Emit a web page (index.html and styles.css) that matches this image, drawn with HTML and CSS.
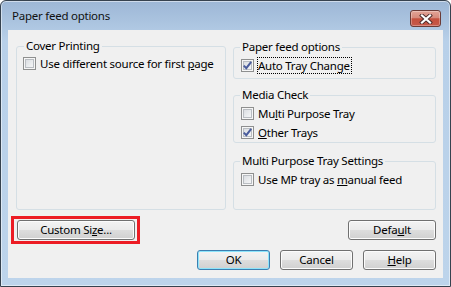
FILE: index.html
```html
<!DOCTYPE html>
<html>
<head>
<meta charset="utf-8">
<link rel="stylesheet" href="styles.css">
</head>
<body>
<div class="window">
  <div class="titlebar">
    <span class="title">Paper feed options</span>
    <span class="close">
      <svg width="14" height="10" viewBox="0 0 14 10">
        <path d="M3 1.5 L11 8.5 M11 1.5 L3 8.5" stroke="#4a2a2a" stroke-width="4" stroke-linecap="square" fill="none"/>
        <path d="M3 1.5 L11 8.5 M11 1.5 L3 8.5" stroke="#ffffff" stroke-width="2.2" stroke-linecap="square" fill="none"/>
      </svg>
    </span>
  </div>
  <div class="client">
    <div class="groups">
      <div class="group cover">
        <div class="gtitle">Cover Printing</div>
        <div class="cb-row"><span class="cb"></span><span class="lbl">Use different source for first <u>p</u>age</span></div>
      </div>
      <div class="rightcol">
        <div class="group rg pf">
          <div class="gtitle">Paper feed options</div>
          <div class="cb-row"><span class="cb checked"><svg width="11" height="11" viewBox="0 0 11 11"><path d="M1.8 5.6 L4.3 8.2 L9.2 1.8" stroke="#4a5c9c" stroke-width="2" fill="none"/></svg></span><span class="lbl focus">Auto Tray Change</span></div>
        </div>
        <div class="group rg mc">
          <div class="gtitle">Media Check</div>
          <div class="cb-row"><span class="cb"></span><span class="lbl">Mu<u>l</u>ti Purpose Tray</span></div>
          <div class="cb-row second"><span class="cb checked"><svg width="11" height="11" viewBox="0 0 11 11"><path d="M1.8 5.6 L4.3 8.2 L9.2 1.8" stroke="#4a5c9c" stroke-width="2" fill="none"/></svg></span><span class="lbl"><u>O</u>ther Trays</span></div>
        </div>
        <div class="group rg mp">
          <div class="gtitle">Multi Purpose Tray Settings</div>
          <div class="cb-row"><span class="cb"></span><span class="lbl">Use MP tray as <u>m</u>anual feed</span></div>
        </div>
      </div>
    </div>
    <div class="row1">
      <div class="highlight"><button class="btn custom">Custom Si<u>z</u>e...</button></div>
      <button class="btn default">Defa<u>u</u>lt</button>
    </div>
    <div class="row2">
      <button class="btn std ok">OK</button>
      <button class="btn std">Cancel</button>
      <button class="btn std"><u>H</u>elp</button>
    </div>
  </div>
</div>
</body>
</html>
```
FILE: styles.css
```css
* { box-sizing: border-box; }
html, body { margin: 0; padding: 0; }
body {
  width: 451px;
  height: 287px;
  overflow: hidden;
  background: #ffffff;
  font-family: "Noto Sans", sans-serif;
  font-size: 11.5px;
  letter-spacing: -0.25px;
  color: #000;
}
.window {
  width: 451px;
  height: 287px;
  border: 1px solid #36424f;
  border-radius: 6px 6px 0 0;
  background: linear-gradient(#9db7d6 0px, #aac3df 20px, #b8d0e9 40px, #bdd4eb 100%);
  box-shadow: inset 0 0 0 1px rgba(255,255,255,0.5);
  padding: 0 7px 8px 7px;
  display: flex;
  flex-direction: column;
}
.titlebar {
  height: 29px;
  display: flex;
  justify-content: space-between;
  align-items: flex-start;
}
.title {
  margin: 7px 0 0 4px;
  line-height: 16px;
  color: #111;
}
.close {
  width: 31px;
  height: 17px;
  margin: 9px 2px 0 0;
  border: 1px solid #6b3b37;
  border-radius: 3px;
  background: linear-gradient(#e2a497 0%, #d68a7c 45%, #c4503e 52%, #c6594a 100%);
  box-shadow: inset 0 0 0 1px rgba(255,255,255,0.3);
  display: flex;
  align-items: center;
  justify-content: center;
}
.close svg { display: block; }
.client {
  flex: 1;
  background: #f0f0f0;
  padding: 16px 7px 0 8px;
}
.groups {
  display: flex;
  gap: 7px;
  height: 164px;
}
.group {
  border: 1px solid #d5dfe5;
  border-radius: 3px;
  padding: 0 6px;
}
.gtitle {
  width: fit-content;
  margin: -9px 0 0 1px;
  padding: 0 2px;
  line-height: 16px;
  background: #f0f0f0;
}
.cover { width: 210px; height: 164px; }
.cover .cb-row { margin-top: 1px; }
.rightcol { width: 203px; }
.rg { padding-left: 7px; }
.rg .gtitle { margin-left: -1px; }
.pf { height: 32px; margin-top: 1px; }
.pf .cb-row { margin-top: 2px; }
.mc { height: 48px; margin-top: 16px; }
.mc .cb-row { margin-top: 2px; }
.mc .cb-row.second { margin-top: 2px; }
.mp { height: 49px; margin-top: 18px; }
.mp .cb-row { margin-top: 2px; }
.cb-row {
  display: flex;
  align-items: center;
  height: 17px;
  gap: 4px;
  white-space: nowrap;
}
.cb {
  width: 13px;
  height: 13px;
  flex: none;
  border: 1px solid #8e8f8f;
  background: linear-gradient(135deg, #d3d6db 0%, #eceef0 60%, #fafafa 100%);
  box-shadow: inset 0 0 0 1px #f6f6f6, inset 0 0 0 2px #b9bdc2;
  display: flex;
  align-items: center;
  justify-content: center;
}
.cb svg { display: block; }
.lbl { line-height: 15px; }
.lbl.focus {
  border: 1px dotted #000;
  padding: 0 1px 0 0;
  margin-left: -1px;
}
.row1 {
  display: flex;
  justify-content: space-between;
  align-items: center;
  margin: 6px 0 0 -5px;
}
.highlight {
  border: 3px solid #ec1c24;
  padding: 1px 2px 1px 3px;
}
.btn {
  display: block;
  height: 20px;
  padding: 0;
  border: 1px solid #707070;
  border-radius: 3px;
  background: linear-gradient(#f3f3f3 0%, #ebebeb 48%, #dddddd 52%, #d0d0d0 100%);
  box-shadow: inset 0 0 0 1px #fcfcfc;
  font-family: "Noto Sans", sans-serif;
  font-size: 11.5px;
  letter-spacing: -0.25px;
  line-height: 16px;
  color: #000;
}
.custom { width: 118px; }
.default { width: 88px; }
.row2 {
  display: flex;
  justify-content: flex-end;
  gap: 10px;
  margin-top: 6px;
}
.std { width: 73px; }
.ok {
  border-color: #3c7fb1;
  box-shadow: inset 0 0 0 1px #8ce4fb;
}
```
